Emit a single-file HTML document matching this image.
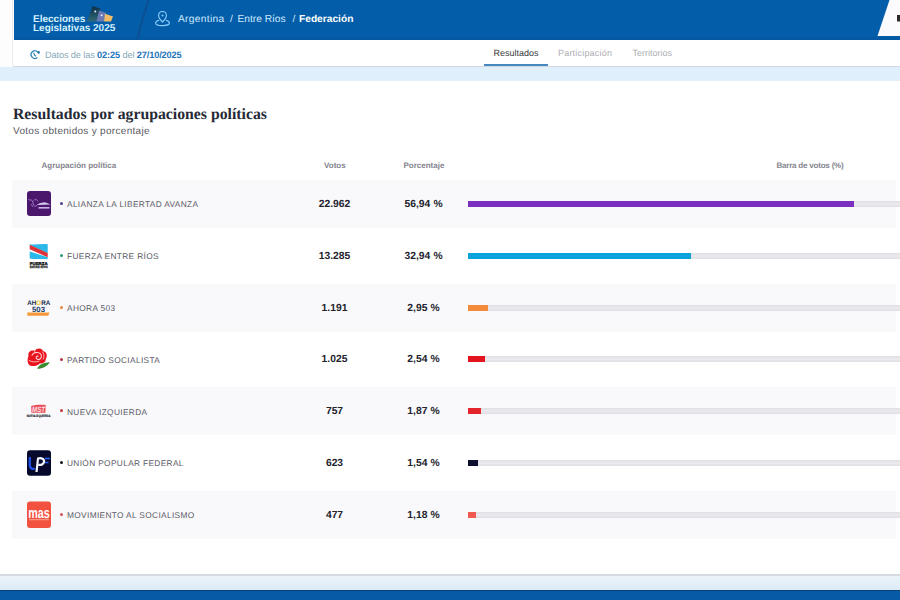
<!DOCTYPE html>
<html><head><meta charset="utf-8">
<style>
*{box-sizing:border-box;margin:0;padding:0}
html,body{width:900px;height:600px;overflow:hidden;background:#fdfdfe;font-family:"Liberation Sans",sans-serif;position:relative;text-rendering:geometricPrecision}
.abs{position:absolute}
#hdr{left:14px;top:0;width:886px;height:39.5px;background:#045da8}
#sub{left:13px;top:39.5px;width:887px;height:27px;background:#fff;border-bottom:1.5px solid #d2d8e0}
#band1{left:0;top:66.5px;width:900px;height:14px;background:#dff0fc;border-bottom:1px solid #e6eef5}
#card{left:0;top:80.5px;width:900px;height:495px;background:#fff;border-bottom:2px solid #d6dbe1}
#band2{left:0;top:576px;width:900px;height:14px;background:linear-gradient(#ecf3f9,#dcebf8)}
#foot{left:0;top:590px;width:900px;height:10px;background:#065aa6;border-top:1.5px solid #0a3f78}
.t{position:absolute;white-space:nowrap;line-height:1}
.row{position:absolute;left:12px;width:884px;height:48px}
.g{background:#f9f9fb}
.logo{position:absolute;left:15px;top:11px;width:24px;height:26px}
.logo svg{display:block;overflow:visible}
.dot{position:absolute;left:48.4px;top:22.3px;width:3px;height:3px;border-radius:50%}
.pname{position:absolute;left:55px;top:20.4px;font-size:8.3px;line-height:1;color:#595966;white-space:nowrap;letter-spacing:0.36px}
.num{position:absolute;top:20.1px;font-size:10.3px;line-height:1;font-weight:bold;color:#23232e;text-align:center;white-space:nowrap}
.votes{left:292.5px;width:60px}
.pct{left:371.5px;width:80px;word-spacing:0.3px}
.track{position:absolute;left:455.5px;top:21px;width:500px;height:6px;background:#e9e9ed;box-shadow:inset 0 1.5px 0 #e0e0e5,inset 0 -1.5px 0 #e0e0e5}
.bar{position:absolute;left:0;top:0;height:6px}
.hh{position:absolute;top:161.5px;font-size:8px;line-height:1;font-weight:bold;color:#84848e;white-space:nowrap}
</style></head><body>
<div class="abs" id="hdr"></div>
<svg class="abs" style="left:0;top:0" width="900" height="40">
  <path d="M148.5 0 C145 12 140 26 137.5 39.5" stroke="#0c4f92" stroke-width="2" fill="none"/>
  <rect x="14" y="37.5" width="886" height="2" fill="#0557a0"/>
  <polygon points="889.5,0 900,0 900,36 877.5,36" fill="#fbfbfd"/>
  <rect x="897" y="15" width="3" height="6.5" fill="#2a2a2a"/>
</svg>
<div class="t" style="left:33px;top:16.2px;font-size:10px;font-weight:bold;color:#d2f1ff;line-height:8.9px">Elecciones<br>Legislativas 2025</div>
<svg class="abs" style="left:84px;top:4px" width="32" height="20" viewBox="84 4 32 20">
  <defs><linearGradient id="c1" x1="0" y1="0" x2="0" y2="1"><stop offset="0" stop-color="#0d2f48"/><stop offset="1" stop-color="#2e6a78"/></linearGradient></defs>
  <polygon points="92.5,6 100.5,8.8 96.5,21.5 87,21.5" fill="url(#c1)"/>
  <circle cx="95.3" cy="11.6" r="1" fill="#dff0ff"/>
  <polygon points="99,10.5 106,12.8 104,21.5 96.5,21.5" fill="#6a78b4"/>
  <circle cx="101.6" cy="15.2" r="1" fill="#e8eeff"/>
  <polygon points="105,13.8 113,16.5 111,21.5 104,21.5" fill="#f0bc68"/>
</svg>
<svg class="abs" style="left:154px;top:10px" width="17" height="18" viewBox="0 0 17 18">
  <path d="M8.5 1.5 C5.9 1.5 4.6 3.4 4.6 5.5 C4.6 8.2 8.5 12 8.5 12 C8.5 12 12.4 8.2 12.4 5.5 C12.4 3.4 11.1 1.5 8.5 1.5 Z" fill="none" stroke="#8ccfff" stroke-width="1.1"/>
  <circle cx="8.5" cy="5.6" r="1" fill="#8ccfff"/>
  <path d="M5.2 10.2 C2.8 10.8 1.6 11.8 1.6 12.9 C1.6 14.5 4.6 15.6 8.5 15.6 C12.4 15.6 15.4 14.5 15.4 12.9 C15.4 11.8 14.2 10.8 11.8 10.2" fill="none" stroke="#8ccfff" stroke-width="1.1"/>
</svg>
<div class="t" style="left:178px;top:15px;font-size:10.2px;color:#cde9ff;letter-spacing:0.33px">Argentina</div>
<div class="t" style="left:230px;top:15px;font-size:10.2px;color:#cde9ff">/</div>
<div class="t" style="left:237.5px;top:15px;font-size:10.2px;color:#cde9ff">Entre Ríos</div>
<div class="t" style="left:292.5px;top:15px;font-size:10.2px;color:#cde9ff">/</div>
<div class="t" style="left:299px;top:15px;font-size:10.2px;font-weight:bold;color:#fff">Federación</div>

<div class="abs" style="left:11.5px;top:0;width:1.5px;height:66px;background:#ececee"></div>
<div class="abs" id="sub"></div>
<svg class="abs" style="left:29px;top:49px" width="12" height="12" viewBox="0 0 12 12">
  <path d="M8.6 2.9 A3.8 3.8 0 1 0 8.3 8.6" fill="none" stroke="#2c86b8" stroke-width="1.3"/>
  <path d="M4.6 3.6 L5.6 6.2 L7 7.3" fill="none" stroke="#2c78a8" stroke-width="1.1"/>
  <circle cx="9.6" cy="3.4" r="1.3" fill="#1f7aa8"/>
</svg>
<div class="t" style="left:45px;top:50.6px;font-size:9.2px;letter-spacing:-0.12px;color:#86a9b8">Datos de las <b style="color:#1d74bb">02:25</b> del <b style="color:#1d74bb">27/10/2025</b></div>
<div class="t" style="left:493.5px;top:48.8px;font-size:9px;color:#383840">Resultados</div>
<div class="abs" style="left:484px;top:63.8px;width:64px;height:2px;background:#4788c2"></div>
<div class="t" style="left:558px;top:48.8px;font-size:9px;color:#adadb3;letter-spacing:0.2px">Participación</div>
<div class="t" style="left:632.4px;top:48.8px;font-size:9px;color:#adadb3">Territorios</div>

<div class="abs" id="band1"></div>
<div class="abs" id="card"></div>
<div class="abs" id="band2"></div>
<div class="abs" id="foot"></div>

<div class="t" style="left:13px;top:106.9px;font-family:'Liberation Serif',serif;font-weight:bold;font-size:15.75px;color:#262a36">Resultados por agrupaciones políticas</div>
<div class="t" style="left:13px;top:127.1px;font-size:10px;color:#5a5a64;letter-spacing:0.3px">Votos obtenidos y porcentaje</div>

<div class="hh" style="left:41.5px">Agrupación política</div>
<div class="hh" style="left:324px">Votos</div>
<div class="hh" style="left:403.5px">Porcentaje</div>
<div class="hh" style="left:776.4px;letter-spacing:-0.2px">Barra de votos (%)</div>

<div class="row g" style="top:180.0px">
<div class="logo"><svg width="24" height="25" viewBox="0 0 24 25"><rect width="24" height="25" rx="3" fill="#4a176c"/>
<path d="M1.5 8.5 C3 9.5 4.5 8.5 5.5 10 C6.5 11.5 5.5 14 7.5 15 C9 15.8 10 14 11 13" stroke="#a98ad8" stroke-width="0.9" fill="none"/>
<path d="M6.5 9.5 C8 8 10.5 8.2 11 10.5 M4 13 L6 16" stroke="#9c7ccc" stroke-width="0.8" fill="none"/>
<path d="M10.5 14 C12 12.5 14 11.5 15 12 C16 11 18 11.2 20 12 L23.5 13.5 L10.5 14 Z" fill="#d6c6ef"/>
<rect x="11.5" y="16" width="11" height="1.6" fill="#c6b0e6"/></svg></div>
<div class="dot" style="background:#4a3f86"></div><div class="pname">ALIANZA LA LIBERTAD AVANZA</div>
<div class="num votes">22.962</div>
<div class="num pct">56,94 %</div>
<div class="track"><div class="bar" style="width:386px;background:#7b2fbe"></div></div>
</div>
<div class="row" style="top:231.8px">
<div class="logo"><svg width="24" height="25" viewBox="0 0 24 25">
<path d="M2.7 1.3 C8 2 15 0.5 20.7 1.2 L20.7 10.2 L2.7 2 Z" fill="#2ab8e8"/>
<path d="M2.7 8.4 L20.7 14.3 L20.7 16.2 C15 15.6 8 16.6 2.7 15.6 Z" fill="#2ab8e8"/>
<path d="M2.7 1.8 L20.7 10 L20.7 14.3 L2.7 6.3 Z" fill="#dc3339"/>
<text x="2.8" y="21.6" textLength="17.8" lengthAdjust="spacingAndGlyphs" font-family="Liberation Sans" font-weight="bold" font-size="4" fill="#1e1e1e" stroke="#1e1e1e" stroke-width="0.35">FUERZA</text>
<text x="2.8" y="25" textLength="17.8" lengthAdjust="spacingAndGlyphs" font-family="Liberation Sans" font-weight="bold" font-size="3.2" fill="#333" stroke="#333" stroke-width="0.3">ENTRE RÍOS</text></svg></div>
<div class="dot" style="background:#2a9a74"></div><div class="pname">FUERZA ENTRE RÍOS</div>
<div class="num votes">13.285</div>
<div class="num pct">32,94 %</div>
<div class="track"><div class="bar" style="width:223px;background:#0ca2dc"></div></div>
</div>
<div class="row g" style="top:283.6px">
<div class="logo"><svg width="24" height="25" viewBox="0 0 24 25">
<text x="0.2" y="10.2" textLength="23" lengthAdjust="spacingAndGlyphs" font-family="Liberation Sans" font-weight="bold" font-size="6.6" fill="#13294a">AH<tspan fill="#f0c020">O</tspan>RA</text>
<text x="5" y="16.8" textLength="13" lengthAdjust="spacingAndGlyphs" font-family="Liberation Sans" font-weight="bold" font-size="7.6" fill="#1a3a66">503</text>
<path d="M0.3 17.6 L22.5 17.6 L21.2 20.8 L0.3 20.8 Z" fill="#f4993a"/></svg></div>
<div class="dot" style="background:#e8843c"></div><div class="pname">AHORA 503</div>
<div class="num votes">1.191</div>
<div class="num pct">2,95 %</div>
<div class="track"><div class="bar" style="width:20px;background:#f28b3a"></div></div>
</div>
<div class="row" style="top:335.4px">
<div class="logo"><svg width="24" height="25" viewBox="0 0 24 25">
<path d="M1.5 10 C0.5 5.5 4.5 3.5 8 4.8 C9.5 1.5 15.5 1.5 16.2 5.3 C19.8 5.8 20.8 10 18.8 12.8 C19 16 16 18 13 17.2 C11.2 19.6 6 21 3 19.4 C0.6 18.4 -0.2 14 1.5 10 Z" fill="#e8141e"/>
<path d="M4.8 9.6 C6.2 6 11.6 5.6 13.8 8.2 C15.8 11 13 14.2 10.4 13.3 C8.4 12.5 8.8 9.8 11.4 10.2" stroke="#ffd8db" stroke-width="1.1" fill="none"/>
<path d="M1.8 14.3 C4.6 16.2 9 16.4 12.4 15 M15.3 5.6 C17.3 8 17.6 11.2 16 13.6 M8 4.8 C7.4 6 7.4 6.8 8 7.4" stroke="#ffc0c4" stroke-width="0.9" fill="none"/>
<path d="M10.2 22.8 C12 18.4 16.6 16.6 22.8 16.3 C20.3 20.4 15.6 22.9 10.2 22.8 Z" fill="#3a8d2c"/></svg></div>
<div class="dot" style="background:#b83040"></div><div class="pname">PARTIDO SOCIALISTA</div>
<div class="num votes">1.025</div>
<div class="num pct">2,54 %</div>
<div class="track"><div class="bar" style="width:17px;background:#e3141e"></div></div>
</div>
<div class="row g" style="top:387.2px">
<div class="logo"><svg width="24" height="25" viewBox="0 0 24 25">
<path d="M4.2 8 C8 6.6 14 6.6 18.7 7 L18.4 14.8 L4.4 14.8 Z" fill="#ea4d58"/>
<text x="5" y="14" textLength="13" lengthAdjust="spacingAndGlyphs" font-family="Liberation Sans" font-weight="bold" font-style="italic" font-size="7.5" fill="#fde4e6">MST</text>
<text x="-0.3" y="19" textLength="23.6" lengthAdjust="spacingAndGlyphs" font-family="Liberation Sans" font-weight="bold" font-size="3.4" fill="#2a2a33" stroke="#2a2a33" stroke-width="0.2">NUEVA IZQUIERDA</text></svg></div>
<div class="dot" style="background:#c8343c"></div><div class="pname">NUEVA IZQUIERDA</div>
<div class="num votes">757</div>
<div class="num pct">1,87 %</div>
<div class="track"><div class="bar" style="width:13px;background:#e3242b"></div></div>
</div>
<div class="row" style="top:439.0px">
<div class="logo"><svg width="24" height="25" viewBox="0 0 24 25"><rect y="0.3" width="24" height="25.4" rx="3" fill="#06082c"/>
<path d="M2.8 7 L2.8 15 C2.8 18.5 5.5 19.5 8 18.5" stroke="#1e50e0" stroke-width="2.4" fill="none"/>
<path d="M9.5 22 L11 8.5 C14.5 7.5 17.5 8.8 17 12 C16.5 14.8 13.5 15.2 11.5 14.8" stroke="#f2f6ff" stroke-width="2.2" fill="none"/>
<path d="M18 8.5 L23 8.5 M18 12.5 L21.5 12.5" stroke="#2c60f2" stroke-width="1.6"/></svg></div>
<div class="dot" style="background:#151520"></div><div class="pname">UNIÓN POPULAR FEDERAL</div>
<div class="num votes">623</div>
<div class="num pct">1,54 %</div>
<div class="track"><div class="bar" style="width:10px;background:#0c0f2e"></div></div>
</div>
<div class="row g" style="top:490.8px">
<div class="logo"><svg width="24" height="26" viewBox="0 0 24 26"><rect y="-0.5" width="24" height="26.4" rx="3" fill="#f2513f"/>
<text x="1.3" y="16" textLength="21.5" lengthAdjust="spacingAndGlyphs" font-family="Liberation Sans" font-weight="bold" font-size="15" fill="#fff">mas</text>
<rect x="2" y="17.3" width="20" height="0.9" fill="#f8b0a0"/></svg></div>
<div class="dot" style="background:#d85060"></div><div class="pname">MOVIMIENTO AL SOCIALISMO</div>
<div class="num votes">477</div>
<div class="num pct">1,18 %</div>
<div class="track"><div class="bar" style="width:8px;background:#f25a50"></div></div>
</div>
</body></html>
